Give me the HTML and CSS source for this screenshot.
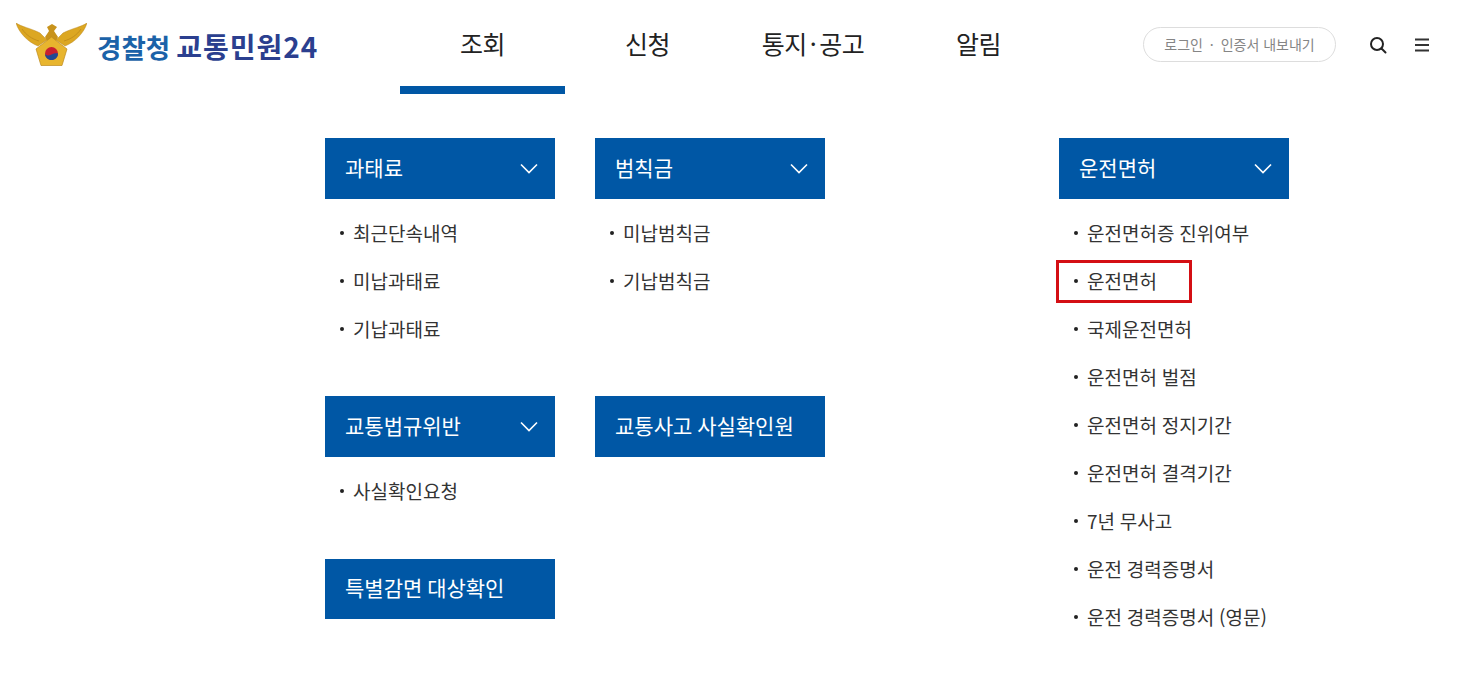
FILE: index.html
```html
<!DOCTYPE html>
<html lang="ko">
  <head>
    <meta charset="utf-8" />
    <link rel="stylesheet" href="styles.css">
    <title>경찰청 교통민원24</title>
  </head>
  <body>
    <header class="header">
      <a class="logo" href="#">
        <svg class="emblem" width="71" height="43" viewBox="0 0 71 43">
          <path fill="#dca722" stroke="#b9851a" stroke-width="0.5" d="M0 0C6 4 14 5 24 10L31 17L22 23C12 19 3 10 0 0Z" />
          <path fill="#dca722" stroke="#b9851a" stroke-width="0.5" d="M71 0C65 4 57 5 47 10L40 17L49 23C59 19 68 10 71 0Z" />
          <path fill="none" stroke="#b9851a" stroke-width="0.7" d="M6 6C10 12 16 16 23 18M65 6C61 12 55 16 48 18" />
          <path fill="#c8931c" d="M31 4L36 1L41 4L38 8L42 14L39 20H32L29 14L33 8Z" />
          <path fill="#e8b52e" stroke="#bd8a1c" stroke-width="0.7" d="M35.5 14L51 26L46 42.5H25L20 26Z" />
          <circle cx="35.5" cy="30.5" r="6.5" fill="#c8202f" />
          <path fill="#1f4a94" d="M29 30.5C30 33 33 33 35.5 31.5C38 30 41 30 42 30.5C42 34.5 39 37 35.5 37C32 37 29 34.5 29 30.5Z" />
        </svg>
        <span class="logo-text"><span class="logo-police">경찰청</span><span class="logo-name">교통민원24</span></span>
      </a>
      <nav class="gnb">
        <a class="gnb-item gnb-item-on" href="#">조회</a>
        <a class="gnb-item" href="#">신청</a>
        <a class="gnb-item gnb-item-wide" href="#">통지<span class="gnb-dot">·</span>공고</a>
        <a class="gnb-item" href="#">알림</a>
      </nav>
      <div class="util">
        <a class="login" href="#">로그인 <span class="login-dot">·</span> 인증서 내보내기</a>
        <a class="util-icon util-search" href="#" aria-label="검색">
          <svg width="20" height="20" viewBox="0 0 20 20" fill="none" stroke="#222" stroke-width="2">
            <circle cx="9" cy="9" r="6" />
            <path d="M13.5 13.5L17.5 17.5" stroke-linecap="round" />
          </svg>
        </a>
        <a class="util-icon" href="#" aria-label="전체메뉴">
          <svg width="20" height="20" viewBox="0 0 20 20" fill="none" stroke="#333" stroke-width="2">
            <path d="M3 4.5H17M3 10H17M3 15.5H17" />
          </svg>
        </a>
      </div>
    </header>

    <main class="menu">
      <div class="menu-left">
        <section class="group">
          <h2 class="group-head">과태료
            <svg class="chevron" width="18" height="11" viewBox="0 0 18 11" fill="none" stroke="#fff" stroke-width="1.6"><path d="M1 1.5L9 9.5L17 1.5" /></svg>
          </h2>
          <ul class="group-list">
            <li>최근단속내역</li>
            <li>미납과태료</li>
            <li>기납과태료</li>
          </ul>
        </section>
        <section class="group">
          <h2 class="group-head">범칙금
            <svg class="chevron" width="18" height="11" viewBox="0 0 18 11" fill="none" stroke="#fff" stroke-width="1.6"><path d="M1 1.5L9 9.5L17 1.5" /></svg>
          </h2>
          <ul class="group-list">
            <li>미납범칙금</li>
            <li>기납범칙금</li>
          </ul>
        </section>
        <section class="group">
          <h2 class="group-head">교통법규위반
            <svg class="chevron" width="18" height="11" viewBox="0 0 18 11" fill="none" stroke="#fff" stroke-width="1.6"><path d="M1 1.5L9 9.5L17 1.5" /></svg>
          </h2>
          <ul class="group-list">
            <li>사실확인요청</li>
          </ul>
        </section>
        <section class="group">
          <h2 class="group-head">교통사고 사실확인원</h2>
        </section>
        <section class="group">
          <h2 class="group-head group-head-short">특별감면 대상확인</h2>
        </section>
      </div>
      <div class="menu-right">
        <section class="group">
          <h2 class="group-head">운전면허
            <svg class="chevron" width="18" height="11" viewBox="0 0 18 11" fill="none" stroke="#fff" stroke-width="1.6"><path d="M1 1.5L9 9.5L17 1.5" /></svg>
          </h2>
          <ul class="group-list">
            <li>운전면허증 진위여부</li>
            <li class="marked">운전면허</li>
            <li>국제운전면허</li>
            <li>운전면허 벌점</li>
            <li>운전면허 정지기간</li>
            <li>운전면허 결격기간</li>
            <li>7년 무사고</li>
            <li>운전 경력증명서</li>
            <li>운전 경력증명서 (영문)</li>
          </ul>
        </section>
      </div>
    </main>
  </body>
</html>
```

FILE: styles.css
```css
* {
  box-sizing: border-box;
}
body {
  margin: 0;
  background: #fff;
  color: #222;
  font-family: "Noto Sans CJK KR", "Noto Sans", sans-serif;
}
a {
  color: inherit;
  text-decoration: none;
}
.header {
  display: flex;
  height: 94px;
  padding-left: 16px;
}
.logo {
  display: flex;
  align-items: flex-start;
  width: 384px;
  padding-top: 23px;
}
.emblem {
  flex: none;
}
.logo-text {
  margin-left: 10px;
  padding-top: 4px;
  font-size: 28px;
  line-height: 38px;
  font-weight: 700;
  white-space: nowrap;
}
.logo-police {
  color: #1b62a8;
  font-size: 26.5px;
}
.logo-name {
  margin-left: 6px;
  color: #2b3f8f;
  letter-spacing: 1px;
}
.gnb {
  display: flex;
}
.gnb-item {
  width: 165px;
  height: 94px;
  padding-top: 24px;
  text-align: center;
  font-size: 25px;
  line-height: 38px;
  letter-spacing: -0.5px;
  color: #222;
}
.gnb-item-wide {
  width: 166px;
}
.gnb-dot {
  margin: 0 3px;
}
.gnb-item-on {
  border-bottom: 8px solid #0057a5;
}
.util {
  display: flex;
  align-items: flex-start;
  margin-left: 82px;
  padding-top: 27px;
}
.login {
  width: 193px;
  height: 35px;
  border: 1px solid #ddd;
  border-radius: 18px;
  text-align: center;
  font-size: 14px;
  line-height: 32px;
  color: #858585;
}
.login-dot {
  margin: 0 3px;
}
.util-icon {
  display: flex;
  margin: 8px 0 0 24px;
}
.util-search {
  margin-left: 32px;
}
.menu {
  display: flex;
  justify-content: space-between;
  width: 964px;
  margin: 44px 0 0 325px;
}
.menu-left {
  display: grid;
  grid-template-columns: 230px 230px;
  column-gap: 40px;
  align-content: start;
}
.menu-right {
  width: 230px;
}
.group {
  padding-bottom: 43px;
}
.group-head {
  display: flex;
  justify-content: space-between;
  align-items: center;
  height: 61px;
  margin: 0;
  padding: 0 17px 4px 20px;
  background: #0057a5;
  color: #fff;
  font-size: 21px;
  font-weight: 400;
  word-spacing: -1px;
}
.chevron {
  margin-top: 4px;
}
.group-head-short {
  height: 60px;
  margin-top: 1px;
}
.group-list {
  list-style: none;
  margin: 0;
  padding: 10px 0 0;
}
.group-list li {
  position: relative;
  height: 48px;
  padding-left: 28px;
  font-size: 19px;
  line-height: 47px;
  word-spacing: -0.5px;
  color: #333;
}
.group-list li::before {
  content: "";
  position: absolute;
  left: 15px;
  top: 22px;
  width: 4px;
  height: 4px;
  border-radius: 50%;
  background: #222;
}
.marked::after {
  content: "";
  position: absolute;
  box-sizing: border-box;
  left: -3px;
  top: 3px;
  width: 136px;
  height: 43px;
  border: 3px solid #d40f14;
}
```
